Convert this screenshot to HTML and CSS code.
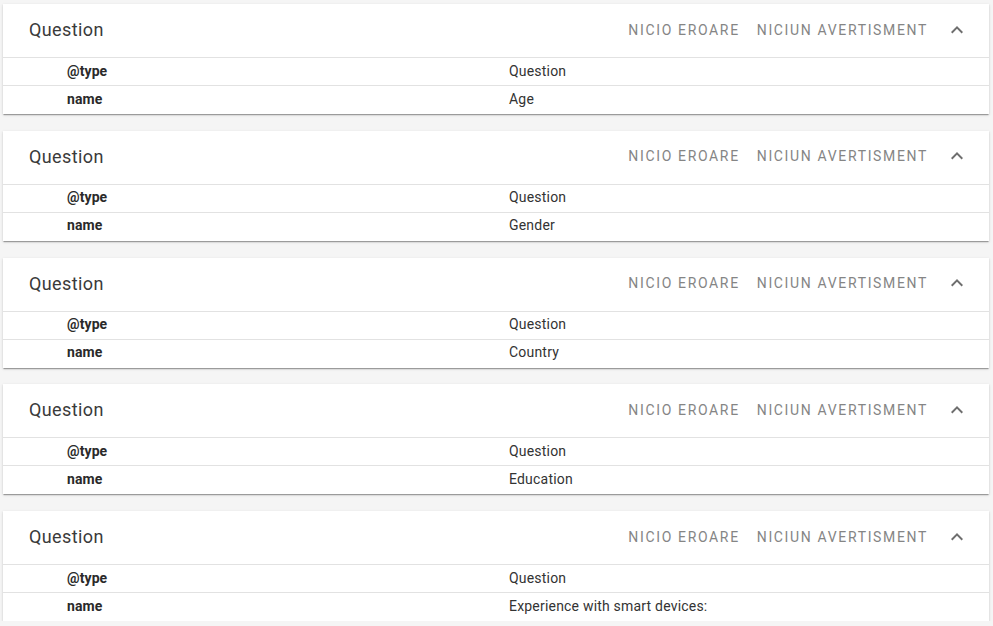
FILE: index.html
```html
<!DOCTYPE html>
<html>
<head>
<meta charset="utf-8">
<link rel="stylesheet" href="styles.css">
</head>
<body>
<div class="list">
  <section class="panel">
    <header class="panel-head">
      <span class="title">Question</span>
      <span class="status">NICIO EROARE</span>
      <span class="status">NICIUN AVERTISMENT</span>
      <svg class="chev" viewBox="0 0 24 24" width="24" height="24"><path d="M12 8l-6 6 1.41 1.41L12 10.83l4.59 4.58L18 14z"/></svg>
    </header>
    <div class="row"><span class="key">@type</span><span class="val">Question</span></div>
    <div class="row"><span class="key">name</span><span class="val">Age</span></div>
  </section>
  <section class="panel">
    <header class="panel-head">
      <span class="title">Question</span>
      <span class="status">NICIO EROARE</span>
      <span class="status">NICIUN AVERTISMENT</span>
      <svg class="chev" viewBox="0 0 24 24" width="24" height="24"><path d="M12 8l-6 6 1.41 1.41L12 10.83l4.59 4.58L18 14z"/></svg>
    </header>
    <div class="row"><span class="key">@type</span><span class="val">Question</span></div>
    <div class="row"><span class="key">name</span><span class="val">Gender</span></div>
  </section>
  <section class="panel">
    <header class="panel-head">
      <span class="title">Question</span>
      <span class="status">NICIO EROARE</span>
      <span class="status">NICIUN AVERTISMENT</span>
      <svg class="chev" viewBox="0 0 24 24" width="24" height="24"><path d="M12 8l-6 6 1.41 1.41L12 10.83l4.59 4.58L18 14z"/></svg>
    </header>
    <div class="row"><span class="key">@type</span><span class="val">Question</span></div>
    <div class="row"><span class="key">name</span><span class="val">Country</span></div>
  </section>
  <section class="panel">
    <header class="panel-head">
      <span class="title">Question</span>
      <span class="status">NICIO EROARE</span>
      <span class="status">NICIUN AVERTISMENT</span>
      <svg class="chev" viewBox="0 0 24 24" width="24" height="24"><path d="M12 8l-6 6 1.41 1.41L12 10.83l4.59 4.58L18 14z"/></svg>
    </header>
    <div class="row"><span class="key">@type</span><span class="val">Question</span></div>
    <div class="row"><span class="key">name</span><span class="val">Education</span></div>
  </section>
  <section class="panel">
    <header class="panel-head">
      <span class="title">Question</span>
      <span class="status">NICIO EROARE</span>
      <span class="status">NICIUN AVERTISMENT</span>
      <svg class="chev" viewBox="0 0 24 24" width="24" height="24"><path d="M12 8l-6 6 1.41 1.41L12 10.83l4.59 4.58L18 14z"/></svg>
    </header>
    <div class="row"><span class="key">@type</span><span class="val">Question</span></div>
    <div class="row"><span class="key">name</span><span class="val">Experience with smart devices:</span></div>
  </section>
</div>
</body>
</html>
```

FILE: styles.css
```css
html, body {
  margin: 0;
  padding: 0;
  background: #f5f5f5;
  font-family: Roboto, "Liberation Sans", sans-serif;
}
.list {
  display: flex;
  flex-direction: column;
  gap: 16.75px;
  padding: 4px 4px 0 3px;
}
.panel {
  background: #fff;
  box-shadow: 0 2px 1px -1px rgba(0,0,0,.2), 0 1px 1px 0 rgba(0,0,0,.14), 0 1px 3px 0 rgba(0,0,0,.12);
  padding-bottom: 1px;
}
.panel-head {
  height: 53px;
  display: flex;
  align-items: center;
  padding: 0 20px 2px 26px;
  box-sizing: border-box;
}
.title {
  flex: 1;
  font-size: 18px;
  letter-spacing: 0.4px;
  color: #3a3a3a;
}
.status {
  font-size: 14px;
  letter-spacing: 1.65px;
  color: #858585;
  margin-right: 17px;
}
.status + .status { margin-right: 17px; }
.chev {
  fill: #6e6e6e;
}
.row {
  display: grid;
  grid-template-columns: 506px 1fr;
  align-items: center;
  border-top: 1px solid #e2e2e2;
  font-size: 14px;
  letter-spacing: 0.2px;
  color: #333;
  padding-bottom: 2px;
  height: 25px;
}
.key {
  font-weight: bold;
  letter-spacing: 0.1px;
  padding-left: 64px;
  color: #2a2a2a;
}
```
